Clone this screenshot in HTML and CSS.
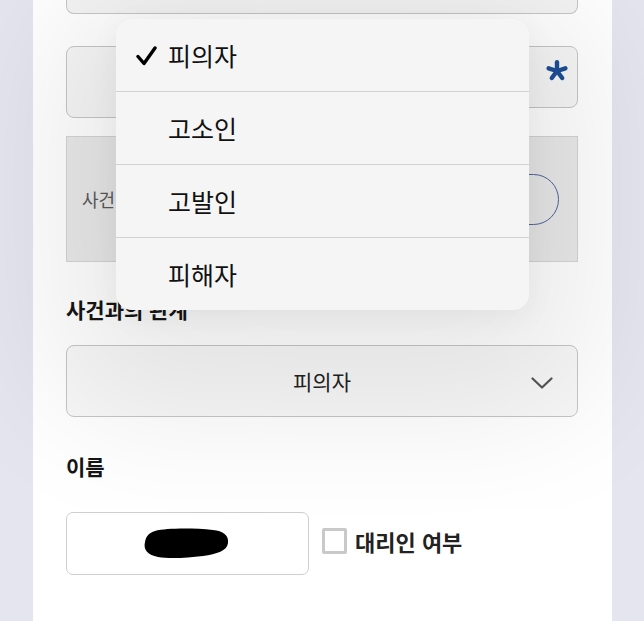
FILE: index.html
```html
<!DOCTYPE html>
<html lang="ko">
<head>
<meta charset="utf-8">
<title>사건과의 관계</title>
<link rel="stylesheet" href="styles.css">
</head>
<body>
<div class="page">
  <div class="panel">
    <div class="field-top"></div>
    <div class="row-two">
      <div class="box box-left"></div>
      <div class="box box-right">
        <svg class="asterisk" width="22" height="22" viewBox="0 0 22 22" aria-hidden="true">
          <g stroke="#1d4f95" stroke-width="4.4" stroke-linecap="round">
            <line x1="11" y1="11" x2="11" y2="2.2"/>
            <line x1="11" y1="11" x2="19.4" y2="8.3"/>
            <line x1="11" y1="11" x2="16.2" y2="18"/>
            <line x1="11" y1="11" x2="5.8" y2="18"/>
            <line x1="11" y1="11" x2="2.6" y2="8.3"/>
          </g>
        </svg>
      </div>
    </div>
    <div class="gray-box">
      <span class="gray-label">사건</span>
      <div class="pill"></div>
    </div>
    <h2 class="label label-rel">사건과의 관계</h2>
    <div class="select">
      <span class="select-value">피의자</span>
      <svg class="chevron" width="22" height="12" viewBox="0 0 22 12" aria-hidden="true">
        <polyline points="1.5,1.5 11,10.5 20.5,1.5" fill="none" stroke="#555" stroke-width="2.2" stroke-linecap="round" stroke-linejoin="round"/>
      </svg>
    </div>
    <h2 class="label label-name">이름</h2>
    <div class="name-row">
      <div class="name-box">
        <svg class="blob" width="86" height="31" viewBox="0 0 86 31" aria-hidden="true">
          <path d="M12 3 C24 0 50 0 70 2 C80 3 86 7 85 15 C84 23 74 26 60 28 C44 30 26 31 15 29 C5 27 0 22 2 14 C3 8 6 5 12 3 Z" fill="#000"/>
        </svg>
      </div>
      <label class="check">
        <span class="checkbox"></span>
        <span class="check-text">대리인 여부</span>
      </label>
    </div>
  </div>

  <ul class="menu">
    <li class="menu-item selected">
      <svg class="tick" width="21" height="20" viewBox="0 0 21 20" aria-hidden="true">
        <polyline points="2,10.5 8,17.5 19,2" fill="none" stroke="#000" stroke-width="3.4" stroke-linecap="round" stroke-linejoin="round"/>
      </svg>
      <span>피의자</span>
    </li>
    <li class="menu-item"><span>고소인</span></li>
    <li class="menu-item"><span>고발인</span></li>
    <li class="menu-item"><span>피해자</span></li>
  </ul>
</div>
</body>
</html>
```

FILE: styles.css
```css
* {
  box-sizing: border-box;
}

html, body {
  margin: 0;
  padding: 0;
  height: 100%;
}

body {
  background: #e4e5ee;
  font-family: "Noto Sans CJK KR", "Noto Sans", sans-serif;
  color: #1a1a1a;
  overflow: hidden;
}

.page {
  position: relative;
  height: 621px;
}

.panel {
  margin: 0 32px 0 33px;
  height: 621px;
  background: #ffffff;
  padding: 0 34px 0 33px;
  display: flex;
  flex-direction: column;
}

.field-top {
  height: 14px;
  border: 1.5px solid #c6c6c6;
  border-top: none;
  border-radius: 0 0 8px 8px;
  background: #f4f4f4;
}

.row-two {
  margin-top: 32px;
  display: flex;
  align-items: flex-start;
}

.box {
  border: 1.5px solid #c6c6c6;
  border-radius: 8px;
  background: #f6f6f6;
}

.box-left {
  width: 260px;
  height: 72px;
}

.box-right {
  flex: 1;
  height: 62px;
  display: flex;
  justify-content: flex-end;
  padding: 13px 9px 0 0;
}

.gray-box {
  margin-top: 18px;
  height: 126px;
  background: #e9e9e9;
  border: 1px solid #d4d4d4;
  display: flex;
  align-items: center;
  justify-content: space-between;
  padding: 0 18px 0 15px;
}

.gray-label {
  font-size: 18px;
  color: #5a5a5a;
}

.pill {
  width: 170px;
  height: 51px;
  border: 1.5px solid #52659a;
  border-radius: 26px;
}

.label {
  margin: 0;
  font-size: 21px;
  line-height: 30px;
  font-weight: 700;
  color: #161616;
}

.label-rel {
  margin-top: 32px;
}

.select {
  margin-top: 21px;
  height: 72px;
  border: 1.5px solid #c6c6c6;
  border-radius: 8px;
  background: #f8f8f8;
  display: flex;
  align-items: center;
  justify-content: center;
  position: relative;
}

.select-value {
  font-size: 21px;
  color: #222;
}

.chevron {
  position: absolute;
  right: 24px;
  top: 31px;
}

.label-name {
  margin-top: 34px;
}

.name-row {
  margin-top: 31px;
  display: flex;
  align-items: center;
  gap: 13px;
}

.name-box {
  width: 243px;
  height: 63px;
  border: 1.5px solid #cfcfcf;
  border-radius: 7px;
  background: #fff;
  display: flex;
  align-items: center;
  justify-content: center;
  padding-right: 4px;
}

.check {
  display: flex;
  align-items: center;
  gap: 8px;
  margin-top: -6px;
}

.checkbox {
  width: 25px;
  height: 26px;
  border: 3px solid #c9c9c9;
  border-radius: 2px;
  background: #fff;
}

.check-text {
  font-size: 22px;
  font-weight: 700;
  color: #222;
}

.menu {
  position: absolute;
  left: 116px;
  top: 19px;
  width: 413px;
  margin: 0;
  padding: 0;
  list-style: none;
  background: #f5f5f5;
  border-radius: 16px;
  overflow: hidden;
  box-shadow: 0 40px 140px 60px rgba(0, 0, 0, 0.085), 0 6px 30px rgba(0, 0, 0, 0.05);
}

.menu-item {
  height: 73px;
  border-top: 1px solid #d2d2d2;
  display: flex;
  align-items: center;
  padding-left: 52px;
  font-size: 25px;
  color: #111;
  position: relative;
}

.menu-item:first-child {
  height: 72px;
  border-top: none;
}

.tick {
  position: absolute;
  left: 20px;
  top: 27px;
}
```
